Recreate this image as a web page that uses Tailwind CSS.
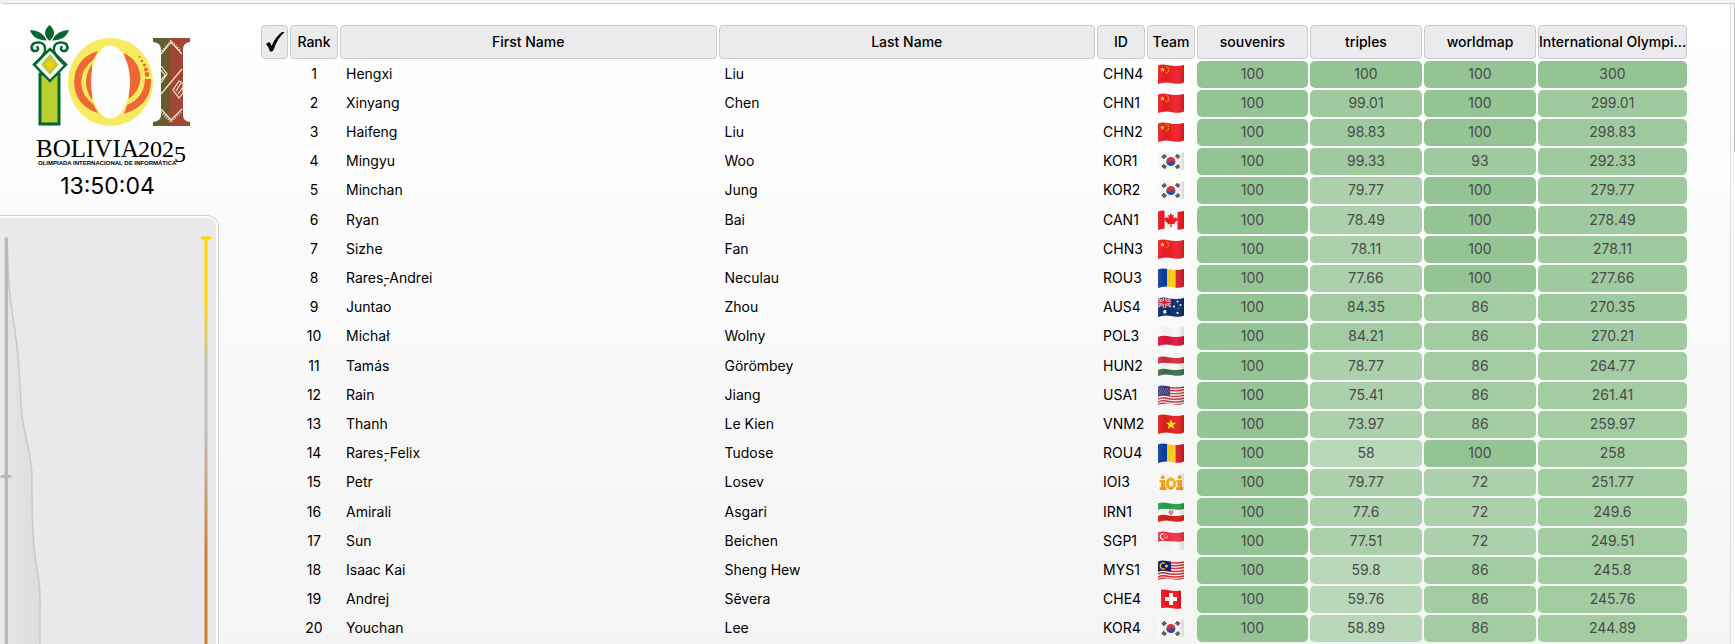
<!DOCTYPE html>
<html lang="en">
<head>
<meta charset="utf-8">
<title>Ranking</title>
<script src="https://cdn.jsdelivr.net/npm/@tailwindcss/browser@4"></script>
</head>
<body class="h-screen overflow-hidden bg-linear-to-b from-white to-[#f4f4f4] text-black font-['Inter','Liberation_Sans',sans-serif]">
<svg class="absolute size-0" aria-hidden="true">
  <defs>
    <clipPath id="wave"><path d="M0 1.500Q4 0 9 1T18 2Q22 2 26 1V18.500Q22 20.500 16 19.500T8 18.500Q4 18.500 0 20z"/></clipPath>
    <linearGradient id="shade" x1="0" x2="1"><stop offset="0" stop-color="#fff" stop-opacity=".08"/><stop offset=".3" stop-color="#000" stop-opacity=".04"/><stop offset=".65" stop-color="#fff" stop-opacity=".06"/><stop offset="1" stop-color="#000" stop-opacity=".14"/></linearGradient>
    <symbol id="CHN" viewBox="0 0 26 21"><path fill="#ee1c25" d="M0 0h26v21H0z"/><path fill="#ffde00" d="m4.500 3 .7 1.800h1.900L5.600 6l.5 1.900-1.600-1.100-1.600 1.100.5-1.900-1.500-1.200h1.900z"/><g fill="#f5b21a"><circle cx="8.500" cy="2.800" r=".8"/><circle cx="10.300" cy="4.400" r=".8"/><circle cx="10.300" cy="6.900" r=".8"/><circle cx="8.500" cy="8.600" r=".8"/></g></symbol>
    <symbol id="KOR" viewBox="0 0 26 21"><path fill="#fbfbfb" d="M0 0h26v21H0z"/><circle cx="13" cy="10.500" r="4.500" fill="#d9303e"/><path fill="#1c4fa8" d="M8.800 9a2.300 2.300 0 0 0 4.200 1.700 2.300 2.300 0 0 1 4.200 1.500A4.500 4.500 0 0 1 8.800 9"/><g stroke="#333" stroke-width="3.600" stroke-dasharray="1.100 .3"><path d="m4.600 6.700 3.400-2.500M18 4.200l3.400 2.500M4.600 14.300 8 16.800M18 16.800l3.400-2.500"/></g></symbol>
    <symbol id="CAN" viewBox="0 0 26 21"><path fill="#fafafa" d="M0 0h26v21H0z"/><path fill="#f0141e" d="M0 0h6.500v21H0zM19.500 0H26v21h-6.500zM13 3l1.400 2.500 1.400-.7-.5 3.800 2-1.700.4 1.200 2-.2-.8 2 .7.600-3.300 2.600.3 1.200-3-.4.100 3h-1.400l.1-3-3 .4.300-1.200-3.300-2.600.7-.6-.8-2 2 .2.400-1.200 2 1.700-.5-3.800 1.400.7z"/></symbol>
    <symbol id="ROU" viewBox="0 0 26 21"><path fill="#0a3ea0" d="M0 0h9v21H0z"/><path fill="#fcd116" d="M9 0h8.500v21H9z"/><path fill="#d9182d" d="M17.500 0H26v21h-8.500z"/></symbol>
    <symbol id="AUS" viewBox="0 0 26 21"><path fill="#0b2a6b" d="M0 0h26v21H0z"/><path stroke="#fff" stroke-width="2" d="m0 1 13 9M13 1 0 10"/><path stroke="#fff" stroke-width="3.600" d="M6.500 0v11M0 5.500h13"/><path stroke="#dc2036" stroke-width=".9" d="m0 1 13 9M13 1 0 10"/><path stroke="#dc2036" stroke-width="2" d="M6.500 0v11M0 5.500h13"/><g fill="#fff"><path d="m6.500 12 .7 1.400 1.500-.3-.7 1.400 1.100 1-1.500.3-.1 1.600-1-1.200-1.400.7.500-1.500-1.300-.9 1.500-.2z"/><circle cx="19.500" cy="4.500" r="1"/><circle cx="16" cy="9.500" r="1"/><circle cx="22.500" cy="8" r="1"/><circle cx="19.500" cy="16" r="1.100"/><circle cx="20.800" cy="11" r=".5"/></g></symbol>
    <symbol id="POL" viewBox="0 0 26 21"><path fill="#fafafa" d="M0 0h26v21H0z"/><path fill="#dc143c" d="M0 11q4-2 9-1t9 1q4 0 8-1v11H0z"/></symbol>
    <symbol id="HUN" viewBox="0 0 26 21"><path fill="#fafafa" d="M0 0h26v21H0z"/><path fill="#d42b3c" d="M0 0h26v7q-4 1-9 .5T8 7Q4 6 0 8z"/><path fill="#3f6f4d" d="M0 14q4-2 8-1t9 1q5 0 9-1v8H0z"/></symbol>
    <symbol id="USA" viewBox="0 0 26 21"><path fill="#f6f1f1" d="M0 0h26v21H0z"/><g fill="none" stroke="#c9323f" stroke-width="1.400"><path d="M0 3q4-2 8-1t9 1q5 0 9-1M0 5.800q4-2 8-1t9 1q5 0 9-1M0 8.600q4-2 8-1t9 1q5 0 9-1M0 11.400q4-2 8-1t9 1q5 0 9-1M0 14.200q4-2 8-1t9 1q5 0 9-1M0 17q4-2 8-1t9 1q5 0 9-1M0 19.600q4-2 8-1t9 1q5 0 9-1"/></g><path fill="#3d3f7d" d="M0 0h12v11q-6-2-12 0z"/><g stroke="#bfc0d8" stroke-width=".8" stroke-dasharray=".8 1.200"><path d="M1 4h10M2 6h9M1 8h10"/></g></symbol>
    <symbol id="VNM" viewBox="0 0 26 21"><path fill="#e01f1c" d="M0 0h26v21H0z"/><path fill="#ffec00" d="m13 5 1.300 3.800h4l-3.200 2.400 1.200 3.900-3.300-2.400-3.300 2.400 1.200-3.900-3.200-2.400h4z"/></symbol>
    <symbol id="IOI" viewBox="0 0 26 21"><path fill="#fdfbf5" d="M0 0h26v21H0z"/><g fill="#f9a51a"><path d="M1.500 8H7v7h1.500v2.500h-7V15H3v-4.500H1.500zM18.500 8H24v7h1v2.500h-7V15h1.500v-4.500h-1z"/><circle cx="4.700" cy="5.300" r="2"/><circle cx="21.500" cy="5.300" r="2"/></g><ellipse cx="13" cy="11.500" rx="3.700" ry="4.300" fill="none" stroke="#f6b01d" stroke-width="3.200"/><path stroke="#e87817" d="M2 17.200h6.500M18 17.200h6.500M11 16.700h4"/></symbol>
    <symbol id="IRN" viewBox="0 0 26 21"><path fill="#fafafa" d="M0 0h26v21H0z"/><path fill="#239f4b" d="M0 0h26v7q-4 1-9 .5T8 7Q4 6 0 8z"/><path fill="#da1a1a" d="M0 14q4-2 8-1t9 1q5 0 9-1v8H0z"/><path fill="none" stroke="#e0484b" stroke-width="1" d="M11.500 8.500q-1.500 3 1.500 4 3-1 1.500-4M13 8v4.500"/></symbol>
    <symbol id="SGP" viewBox="0 0 26 21"><path fill="#fafafa" d="M0 0h26v21H0z"/><path fill="#ee2f42" d="M0 0h26v10q-4 1-9 .5T8 10Q4 9 0 11z"/><path fill="none" stroke="#fff" stroke-width="1.200" d="M6 3a2.700 2.700 0 1 0 0 5"/><g fill="#fff"><circle cx="8" cy="3.500" r=".6"/><circle cx="6.800" cy="5" r=".6"/><circle cx="9.300" cy="5" r=".6"/><circle cx="7.200" cy="6.800" r=".6"/><circle cx="8.900" cy="6.800" r=".6"/></g></symbol>
    <symbol id="MYS" viewBox="0 0 26 21"><path fill="#fafafa" d="M0 0h26v21H0z"/><g fill="none" stroke="#d8252d" stroke-width="1.500"><path d="M0 3q4-2 8-1t9 1q5 0 9-1M0 5.800q4-2 8-1t9 1q5 0 9-1M0 8.600q4-2 8-1t9 1q5 0 9-1M0 11.400q4-2 8-1t9 1q5 0 9-1M0 14.200q4-2 8-1t9 1q5 0 9-1M0 17q4-2 8-1t9 1q5 0 9-1M0 19.600q4-2 8-1t9 1q5 0 9-1"/></g><path fill="#0d1c6b" d="M0 0h13v11.500q-7-2-13 0z"/><path fill="none" stroke="#f5c91c" stroke-width="1.300" d="M7 3.500a3 3 0 1 0 0 5"/><circle cx="8.500" cy="6" r="1.600" fill="#f5c91c"/></symbol>
    <symbol id="CHE" viewBox="0 0 26 21"><path fill="#f5101b" d="M3 0h20v21H3z"/><path fill="#fff" d="M11 4h4v4h4v4h-4v4h-4v-4H7V8h4z"/></symbol>
  </defs>
</svg>
<div class="flex h-full flex-col">
  <div class="h-1 shrink-0 rounded-bl-lg border-b border-[#d0d0d0] bg-[#f3f3f3]"></div>
  <div class="flex min-h-0 flex-1">
    <aside class="flex w-[219px] shrink-0 flex-col">
      <div class="flex flex-col items-center pt-[18px]">
        <svg class="h-[144px] w-[168px]" viewBox="26 22 168 144" role="img" aria-label="IOI Bolivia 2025">
          <path fill="#b9cf32" stroke="#04672f" stroke-width="3" d="M40 74h19v50H40z"/>
          <path fill="#fdfdfd" stroke="#04672f" stroke-width="2.500" d="m50 49 16 15.500L50 81 34 64.500z"/>
          <path fill="#bccf32" d="m50 54 8.500 10.500L50 75l-9-10.500z"/><path fill="#ffc808" d="m50 60 4 4.500-4 5-4.500-5z"/>
          <path fill="#04672f" d="M49.500 25q-9 8 0 16 9-8 0-16M30 30q3 10 17 10.500Q42 30 30 30M69 30q-3 10-17 10.500Q57 30 69 30"/>
          <g fill="none" stroke="#04672f" stroke-width="2.600" stroke-linecap="round"><path d="M35 64q9-8 10-13 1-8-6-8.500-7-.5-7.500 5 .5 4 4.500 3.500 3-1 1.500-4M64 64q-9-8-10-13-1-8 6-8.500 7-.5 7.500 5-.5 4-4.500 3.500-3-1-1.500-4"/></g>
          <ellipse cx="110.500" cy="82" rx="42.500" ry="44" fill="#f8eb62"/>
          <path fill="#ed6737" d="M98 51Q75 58 74 82 75 106 98 113l-5-9q-11-8-12-22 1-14 12-22z"/>
          <path fill="#ed6737" d="M92 64Q80 82 92 100z"/>
          <path fill="#ed6737" d="M124 53q16 8 16.500 26-.5 11-11.500 20z"/>
          <path fill="#ed6737" d="M145 79h6q1 26-27 35l3-9q17-7 18-26"/>
          <ellipse cx="110.500" cy="82" rx="19.500" ry="36.500" fill="#fdfdfd"/>
          <g fill="#ed6737"><circle cx="139.500" cy="57" r="1"/><circle cx="142" cy="61" r="1.300"/><circle cx="144.500" cy="65" r="1.600"/><circle cx="146" cy="69.500" r="2"/><circle cx="147" cy="74.500" r="2.400"/></g>
          <path fill="#655d2d" d="M153 38h18v88h-18v-4q8-1 8-7V49q0-6-8-7z"/><path fill="#a24535" d="M170 38h20v4q-7 1-7 7v66q0 6 7 7v4h-20z"/>
          <g fill="none" stroke="#f5e7d3" stroke-width="1.200"><path d="m161 54 10-12 11 12M161 94l21-25M161 109l10 11 11-11M173 90l6-9 4 2v10l-4 5zM176 91l5-8M178 94l5-7M161 66l6 8-6 9M161 70l4 5-4 5"/><path stroke-width="2" stroke-dasharray="1 1.500" d="m162 51 9-10 10 10M161 112l10 10 10-10"/></g>
          <text x="36" y="157" font-family="Liberation Serif" font-size="25">BOLIVIA</text>
          <text x="138" y="157" font-family="Liberation Serif" font-size="24">202<tspan dy="5">5</tspan></text>
          <text x="38" y="165" font-family="Liberation Sans" font-weight="700" font-size="6">OLIMPIADA INTERNACIONAL DE INFORMÁTICA</text>
        </svg>
        <time class="mr-1 mt-1 text-[23px] leading-8">13:50:04</time>
      </div>
      <div class="mt-[13px] min-h-0 flex-1 overflow-hidden rounded-tr-xl border-t border-r border-[#cfcfcf] bg-white pt-0.5 pr-0.5">
        <div class="h-full overflow-hidden rounded-tr-lg bg-[#e9e9eb]">
          <svg class="h-[426px] w-[216px]" viewBox="0 218 216 426" role="img" aria-label="Score histogram">
            <defs><linearGradient id="medal" gradientUnits="userSpaceOnUse" x1="0" y1="238" x2="0" y2="644"><stop offset="0" stop-color="#ffd700"/><stop offset=".15" stop-color="#ffd700"/><stop offset=".32" stop-color="#c0c0c0"/><stop offset=".47" stop-color="#c0c0c0"/><stop offset=".78" stop-color="#cd7f32"/><stop offset="1" stop-color="#cd7f32"/></linearGradient><linearGradient id="hist"><stop stop-color="#e5e5e5"/><stop offset="1" stop-color="#dcdcdc"/></linearGradient></defs>
            <path fill="url(#hist)" stroke="#c9c9c9" stroke-width="1.500" d="M7 238C8 270 9 292 11 304C15 334 18 344 19 370C21 390 20 408 24 428C29 452 32 462 32 480C32 510 32 530 34 546C37 575 41 583 40 605L40 650H7z"/>
            <path stroke="#b8b8b8" stroke-width="3.500" stroke-linecap="round" d="M6.300 239v420"/><path stroke="#b8b8b8" stroke-width="3" stroke-linecap="round" d="M2 476.500h8"/>
            <path fill="url(#medal)" d="M204.500 238h3v410h-3z"/><path fill="#ffd700" d="M201 236.500h10v3h-10z"/>
          </svg>
        </div>
      </div>
    </aside>
    <main class="min-w-0 flex-1 overflow-hidden pt-[19px] pr-[41px] pl-10">
      <table class="w-full table-fixed border-separate border-spacing-[2px] text-sm">
        <colgroup><col class="w-[27px]"><col class="w-12"><col><col><col class="w-12"><col class="w-12"><col class="w-[111px]"><col class="w-[112px]"><col class="w-[112px]"><col class="w-[149px]"></colgroup>
        <thead><tr id="head"></tr></thead>
        <tbody id="rows"></tbody>
      </table>
    </main>
    <div class="flex w-[5px] shrink-0 justify-end border-l border-[#dcdcdc] bg-[#fafafa]"><div class="h-[148px] w-px bg-[#bdbdbd]"></div></div>
  </div>
</div>
<script>
const head = ['✔','Rank','First Name','Last Name','ID','Team','souvenirs','triples','worldmap','International Olympi...'];
const check = '<svg class="mx-auto h-[22px] w-5" viewBox="0 0 20 22" role="img" aria-label="Selected"><path d="M1 13l3-2q2 1 2.500 4Q11 5 17 1h2.500Q12 8 8.500 19q-1 2-3.500 1.500Q4 16 1 13z"/></svg>';
document.getElementById('head').innerHTML = head.map((h,i) => `<th scope="col" class="h-[34px] overflow-hidden rounded border border-[#cbcbcd] bg-[#ebebed] p-0 pb-px text-center font-medium whitespace-nowrap">${i ? h : check}</th>`).join('');
const data = `Hengxi|Liu|CHN4|100|100|300
Xinyang|Chen|CHN1|99.01|100|299.01
Haifeng|Liu|CHN2|98.83|100|298.83
Mingyu|Woo|KOR1|99.33|93|292.33
Minchan|Jung|KOR2|79.77|100|279.77
Ryan|Bai|CAN1|78.49|100|278.49
Sizhe|Fan|CHN3|78.11|100|278.11
Rares-\u0326Andrei|Neculau|ROU3|77.66|100|277.66
Juntao|Zhou|AUS4|84.35|86|270.35
Michał|Wolny|POL3|84.21|86|270.21
Tamás|Görömbey|HUN2|78.77|86|264.77
Rain|Jiang|USA1|75.41|86|261.41
Thanh|Le Kien|VNM2|73.97|86|259.97
Rares-\u0326Felix|Tudose|ROU4|58|100|258
Petr|Losev|IOI3|79.77|72|251.77
Amirali|Asgari|IRN1|77.6|72|249.6
Sun|Beichen|SGP1|77.51|72|249.51
Isaac Kai|Sheng Hew|MYS1|59.8|86|245.8
Andrej|Sěvera|CHE4|59.76|86|245.76
Youchan|Lee|KOR4|58.89|86|244.89`.split('\n').map(r => r.split('|'));
const tone = p => p >= 100 ? 'bg-[#94c494]' : p >= 90 ? 'bg-[#9fca9f]' : p >= 80 ? 'bg-[#a3cca3]' : p >= 70 ? 'bg-[#abd0ab]' : 'bg-[#b9d8b9]';
const score = (v, max) => `<td class="rounded-[5px] p-0 pb-px text-center text-[#4a4a4a] ${tone(v / max * 100)}">${v}</td>`;
document.getElementById('rows').innerHTML = data.map(([f,l,id,t,w,g], i) => `<tr class="${i % 5 === 0 && i ? 'h-7' : 'h-[27px]'}"><td></td><td class="p-0 pb-px text-center">${i+1}</td><td class="truncate px-1.5 pt-0 pb-px">${f}</td><td class="truncate px-1.5 pt-0 pb-px">${l}</td><td class="p-0 pb-px pl-1.5 whitespace-nowrap">${id}</td><td class="p-0"><svg class="mx-auto h-[21px] w-[26px]" viewBox="0 0 26 21" role="img" aria-label="${id.slice(0,3)}"><g clip-path="url(#wave)"><use href="#${id.slice(0,3)}" width="26" height="21"/><path fill="url(#shade)" d="${id.startsWith('CHE') ? 'M3 0h20v21H3z' : 'M0 0h26v21H0z'}"/></g></svg></td>${score(100,100)}${score(t,100)}${score(w,100)}${score(g,300)}</tr>`).join('');
</script>
</body>
</html>
